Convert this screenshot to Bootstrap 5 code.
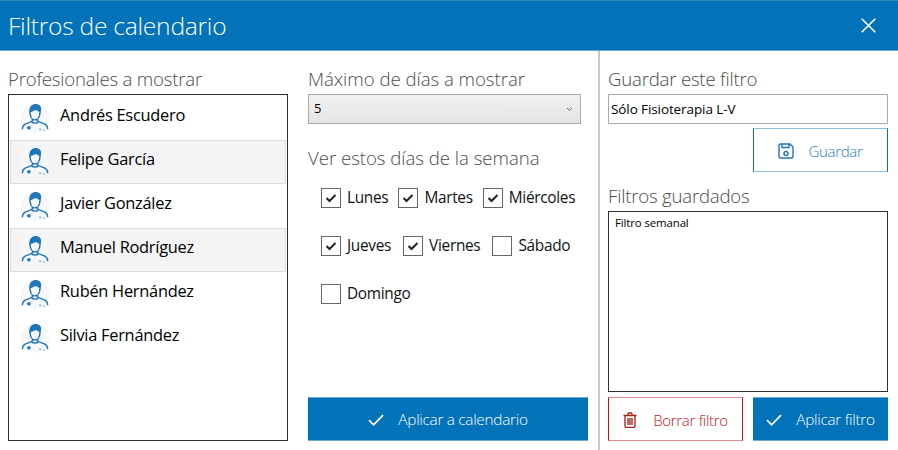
<!DOCTYPE html>
<html lang="es">
<head>
<meta charset="utf-8">
<title>Filtros de calendario</title>
<link rel="stylesheet" href="https://cdn.jsdelivr.net/npm/bootstrap@5.3.0/dist/css/bootstrap.min.css">
<style>
html,body{margin:0;height:450px;overflow:hidden;background:#fff;font-family:"Open Sans","Noto Sans",sans-serif;color:#000}
.dlg-head{height:51px;background:#0272b9;border-top:1px solid #3d86b4;border-bottom:1px solid #6aa9d3;color:#fff;padding-left:8px;padding-right:22px}
.dlg-title{font-size:24.6px;font-weight:300;letter-spacing:-.25px;line-height:1;margin:2px 0 0}
.dlg-body{height:399px}
.pane-a{width:298px;padding:16px 10px 9px 8px}
.pane-b{width:300px;padding:16px 0 9px 10px}
.pane-c{width:300px;border-left:2px solid #c9c9c9;padding:16px 10px 9px 8px}
.sec-label{font-size:18.6px;font-weight:300;color:#4c4c4c;line-height:24px;letter-spacing:-.2px;margin:0}
.pane-b .sec-label{letter-spacing:-.02px}
.people{height:347px;border:1px solid #2f2f2f;padding:1px;margin-top:3px}
.person{height:44px;padding-left:10px;font-size:16.4px;letter-spacing:-.27px;gap:10px}
.person.shaded{background:#f4f4f4;border:1px solid #dcdcdc;padding-left:9px}
.person span{margin-bottom:6px}
.ava{width:30px;height:30px;flex:none}
.sel-box{width:273px;height:30px;margin-top:3px;border:1px solid #ababab;background:linear-gradient(#f1f1f1,#e5e5e5);font-size:13px;padding:0 7px 0 5px}
.days{padding:16px 0 0 13px}
.day-row{height:48px;gap:10px}
.day-row.wider{gap:12px}
.day-check{gap:6px;font-size:15.4px;letter-spacing:-.3px;color:#111}
.box{width:20px;height:20px;border:1px solid #666;background:#fff;flex:none}
.spacer{flex:1}
.act{height:44px;border:0;border-radius:0;font-size:15.4px;letter-spacing:-.3px;font-weight:300;padding:2px 0 0}
.act-fill{background:#0272b9;color:#fff;border-top:1px solid #6aa9d3;border-bottom:1px solid #6aa9d3}
.act-fill:hover{background:#0272b9;color:#fff}
.apply-wide{width:280px;gap:14px}
.text-in{height:30px;margin-top:3px;border:1px solid #ababab;font-size:13.500px;padding:0 2px;line-height:28px;letter-spacing:-.1px}
.save-btn{width:135px;height:44px;margin:4px 0 0 auto;padding:2px 0 0;background:#fff;border:1px solid #0272b9;border-top-color:#8dbfe0;border-bottom-color:#8dbfe0;border-radius:0;color:#2a7dbd;font-size:15px;font-weight:300;gap:14px;letter-spacing:-.3px}
.saved-list{height:181px;border:1px solid #2f2f2f;margin-top:3px;padding:3px 6px;font-size:11.4px;line-height:16px;letter-spacing:-.1px}
.bottom-acts{gap:10px;margin-top:5px}
.del-btn{width:135px;height:44px;padding:2px 0 0;background:#fff;border:1px solid #c8161d;border-top-color:#e58b8f;border-bottom-color:#e58b8f;border-radius:0;color:#c0141b;font-size:15px;font-weight:300;letter-spacing:-.3px;gap:16px}
.apply-small{width:135px;gap:14px}
.mt-saved{margin-top:12px}
.mt-week{margin-top:22px}
</style>
</head>
<body>
<svg width="0" height="0" class="position-absolute">
<defs>
<symbol id="doc" viewBox="0 0 32 32">
<circle cx="16" cy="16" r="15.500" fill="#f7f7f7"/>
<path d="M10 11.500C9 5 12 1 16.500 1c4 0 6.500 2.500 6 6l-.8 5c-.8-2.800-3-4-5.200-4.500-1.500 1.500-5 1.500-6.500 4z" fill="#1f77ba"/>
<path d="M10.800 10c0 4.500 2 8 5.200 8s5.200-3.500 5.200-8M13 17.500v2l-7.500 3C3.500 23.500 2.500 25.500 2.500 28M19 17.500v2l7.500 3c2 1 3 3 3 5.500M12.500 20c1.500 2 5.500 2 7 0" fill="none" stroke="#1f77ba" stroke-width="1.500"/>
<circle cx="9.500" cy="26.500" r="1.900" fill="#1f77ba"/><circle cx="21.500" cy="28" r="1.100" fill="#7fb3d9"/><circle cx="25.500" cy="29" r=".9" fill="#7fb3d9"/>
</symbol>
<symbol id="tick" viewBox="0 0 16 12"><path d="M1 6.200 5.600 10.800 15 1.200" fill="none" stroke="currentColor" stroke-width="1.700"/></symbol>
<symbol id="mini" viewBox="0 0 12 10"><path d="M1.500 5 4.500 8 10.500 2" fill="none" stroke="#222" stroke-width="2"/></symbol>
</defs>
</svg>

<header class="dlg-head d-flex align-items-center justify-content-between">
<h1 class="dlg-title">Filtros de calendario</h1>
<svg width="15" height="15" viewBox="0 0 15 15" aria-label="Cerrar"><path d="M.7.700 14.300 14.300M14.300.700.7 14.300" stroke="#fff" stroke-width="1.600"/></svg>
</header>

<main class="dlg-body d-flex">
<section class="pane-a d-flex flex-column">
<p class="sec-label">Profesionales a mostrar</p>
<div class="people">
<div class="person d-flex align-items-center"><svg class="ava"><use href="#doc"/></svg><span>Andrés Escudero</span></div>
<div class="person shaded d-flex align-items-center"><svg class="ava"><use href="#doc"/></svg><span>Felipe García</span></div>
<div class="person d-flex align-items-center"><svg class="ava"><use href="#doc"/></svg><span>Javier González</span></div>
<div class="person shaded d-flex align-items-center"><svg class="ava"><use href="#doc"/></svg><span>Manuel Rodríguez</span></div>
<div class="person d-flex align-items-center"><svg class="ava"><use href="#doc"/></svg><span>Rubén Hernández</span></div>
<div class="person d-flex align-items-center"><svg class="ava"><use href="#doc"/></svg><span>Silvia Fernández</span></div>
</div>
</section>

<section class="pane-b d-flex flex-column">
<p class="sec-label">Máximo de días a mostrar</p>
<div class="sel-box d-flex align-items-center justify-content-between"><span>5</span><svg width="7" height="5" viewBox="0 0 7 5"><path d="M1 1 3.500 3.500 6 1" fill="none" stroke="#666"/></svg></div>
<p class="sec-label mt-week">Ver estos días de la semana</p>
<div class="days">
<div class="day-row d-flex align-items-start">
<label class="day-check d-flex align-items-center"><span class="box d-flex align-items-center justify-content-center"><svg width="12" height="10"><use href="#mini"/></svg></span>Lunes</label>
<label class="day-check d-flex align-items-center"><span class="box d-flex align-items-center justify-content-center"><svg width="12" height="10"><use href="#mini"/></svg></span>Martes</label>
<label class="day-check d-flex align-items-center"><span class="box d-flex align-items-center justify-content-center"><svg width="12" height="10"><use href="#mini"/></svg></span>Miércoles</label>
</div>
<div class="day-row wider d-flex align-items-start">
<label class="day-check d-flex align-items-center"><span class="box d-flex align-items-center justify-content-center"><svg width="12" height="10"><use href="#mini"/></svg></span>Jueves</label>
<label class="day-check d-flex align-items-center"><span class="box d-flex align-items-center justify-content-center"><svg width="12" height="10"><use href="#mini"/></svg></span>Viernes</label>
<label class="day-check d-flex align-items-center"><span class="box"></span>Sábado</label>
</div>
<div class="day-row d-flex align-items-start">
<label class="day-check d-flex align-items-center"><span class="box"></span>Domingo</label>
</div>
</div>
<div class="spacer"></div>
<button class="btn act act-fill apply-wide d-flex align-items-center justify-content-center"><svg width="16" height="12"><use href="#tick"/></svg>Aplicar a calendario</button>
</section>

<section class="pane-c d-flex flex-column">
<p class="sec-label">Guardar este filtro</p>
<div class="text-in">Sólo Fisioterapia L-V</div>
<button class="btn save-btn d-flex align-items-center justify-content-center">
<svg width="16" height="16" viewBox="0 0 16 16" fill="none" stroke="#1f77ba" stroke-width="1.400"><path d="M2.500 1h9.500l3 3v9.500a1.500 1.500 0 0 1-1.500 1.500h-11A1.500 1.500 0 0 1 1 13.500v-11A1.500 1.500 0 0 1 2.500 1z"/><path d="M4 1v3.500h7V1"/><circle cx="8" cy="10.500" r="2"/></svg>Guardar</button>
<p class="sec-label mt-saved">Filtros guardados</p>
<div class="saved-list">Filtro semanal</div>
<div class="bottom-acts d-flex">
<button class="btn del-btn d-flex align-items-center justify-content-center">
<svg width="14" height="16" viewBox="0 0 14 16" fill="none" stroke="#a8281f" stroke-width="1.400"><path d="M.5 3.500h13M2 3.500V14a1.500 1.500 0 0 0 1.500 1.500h7A1.500 1.500 0 0 0 12 14V3.500M4.500 3.500 5.500 1h3l1 2.500M5 6v7M7 6v7M9 6v7"/></svg>Borrar filtro</button>
<button class="btn act act-fill apply-small d-flex align-items-center justify-content-center"><svg width="16" height="12"><use href="#tick"/></svg>Aplicar filtro</button>
</div>
</section>
</main>
<script src="https://cdn.jsdelivr.net/npm/bootstrap@5.3.0/dist/js/bootstrap.bundle.min.js"></script>
</body>
</html>
